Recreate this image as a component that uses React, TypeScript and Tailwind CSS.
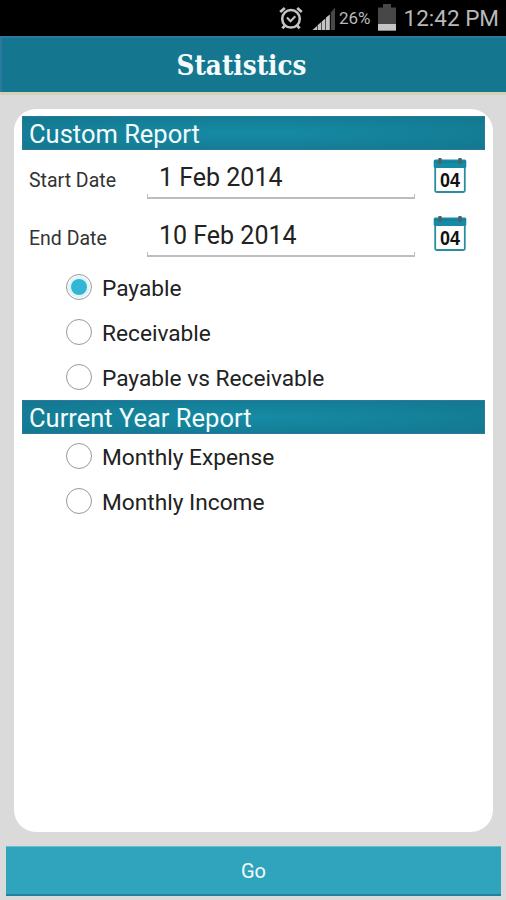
import React, { useState } from 'react';

interface RadioRowProps {
  label: string;
  checked: boolean;
  onSelect: () => void;
}

interface DateRowProps {
  label: string;
  value: string;
}

const CUSTOM_REPORTS = ['Payable', 'Receivable', 'Payable vs Receivable'];
const YEAR_REPORTS = ['Monthly Expense', 'Monthly Income'];

// --- Icons ---

const AlarmIcon: React.FC = () => (
  <svg width="24" height="24" viewBox="0 0 24 24" fill="none" stroke="#c4c4c4" strokeWidth="2.5">
    <circle cx="12" cy="12.8" r="8.8" />
    <path d="M8 11.6l3.5 3.6 4.8-4.9" strokeWidth="2.1" />
    <path d="M1.2 6l4.6-4M22.8 6l-4.6-4" strokeWidth="2.8" />
    <path d="M6 19.3l-2.6 3M18 19.3l2.6 3" strokeWidth="2.8" />
  </svg>
);

const SignalIcon: React.FC = () => (
  <svg width="24" height="24" viewBox="0 0 24 24">
    <path d="M.5 23L5 19v4z" fill="#c4c4c4" />
    <path d="M5.6 18.2L9.200 15v8H5.600zM9.800 14.400l3.600-2.800V23H9.800zM14 10.600l3.800-3V23H14z" fill="#c4c4c4" />
    <path d="M18.800 5.500L23 .8V23h-4.200z" fill="#474747" />
  </svg>
);

const BatteryIcon: React.FC = () => (
  <svg width="18" height="27" viewBox="0 0 18 27">
    <path d="M5 0h8v3.500h5V27H0V3.500h5z" fill="#474747" />
    <path d="M0 20h18v6.500H0z" fill="#c4c4c4" />
  </svg>
);

const CalendarIcon: React.FC = () => (
  <svg width="34" height="37" viewBox="0 0 34 37">
    <rect x="2.2" y="4" width="29.6" height="30" rx="1.5" fill="#fff" stroke="#2b8da3" strokeWidth="1.8" />
    <path d="M.7 3q0-1.500 1.500-1.500h29.600q1.500 0 1.500 1.500V8.500q0 1.500-1.500 1.500H2.200Q.7 10 .7 8.500z" fill="#168ba5" />
    <path d="M1 4h32" stroke="#14778f" />
    <path d="M7 1.500v3M27 1.500v3" stroke="#4c626b" strokeWidth="3.600" strokeLinecap="round" />
    <text
      x="17"
      y="28.5"
      textAnchor="middle"
      textLength="20"
      lengthAdjust="spacingAndGlyphs"
      fontFamily="Liberation Sans, sans-serif"
      fontWeight="700"
      fontSize="20"
      fill="#111"
    >
      04
    </text>
  </svg>
);

// --- Rows ---

const SectionTitle: React.FC<{ children: React.ReactNode }> = ({ children }) => (
  <h2 className="h-[34px] border border-[#2c79a0] bg-radial from-[#168ba5] to-[#13778f] pl-1.5 text-[25.5px] leading-[34px] text-[#f4fbfc]">
    {children}
  </h2>
);

const DateRow: React.FC<DateRowProps> = ({ label, value }) => (
  <div className="flex h-[57.5px] pl-[7px]">
    <span className="w-[118px] pt-[17px] text-[19.5px] leading-7 text-[#333]">{label}</span>
    <div className="w-[268px]">
      <div className="h-11 pl-3 pt-3 text-[25px] leading-8 text-[#222]">{value}</div>
      <div className="h-[5px] border-x border-b-2 border-[#bdbdbd]" />
    </div>
    <button className="ml-[18px] h-[37px] pt-2">
      <CalendarIcon />
    </button>
  </div>
);

const RadioRow: React.FC<RadioRowProps> = ({ label, checked, onSelect }) => (
  <button
    role="radio"
    aria-checked={checked}
    onClick={onSelect}
    className="flex h-[45px] w-full items-center gap-2.5 pl-[44px] text-left text-[22.7px] text-[#222]"
  >
    <span className="mb-px flex size-[26px] items-center justify-center rounded-full border-[1.5px] border-[#999]">
      {checked && <span className="size-4 rounded-full bg-[#33b5d5] ring-3 ring-[#e0f5fa]" />}
    </span>
    <span className="pt-0.5 leading-8">{label}</span>
  </button>
);

const App: React.FC = () => {
  const [selected, setSelected] = useState('Payable');

  return (
    <div className="flex h-[900px] w-[506px] flex-col overflow-hidden bg-[#dadada] font-[Roboto,sans-serif]">
      {/* Status bar */}
      <div className="flex h-9 shrink-0 items-center justify-end bg-black pr-[7px] text-[#b9b9b9]">
        <AlarmIcon />
        <span className="ml-[9px] pt-px">
          <SignalIcon />
        </span>
        <span className="ml-[3px] pt-0.5 text-[17px]">26%</span>
        <span className="ml-[7px] pb-0.5">
          <BatteryIcon />
        </span>
        <span className="ml-2 pt-0.5 text-[22.5px]">12:42 PM</span>
      </div>

      <header className="flex h-14 shrink-0 items-center justify-center border-l-2 border-t-2 border-[#2b78a0] bg-[#14778f] pr-[25px]">
        <h1 className="pt-0.5 font-['DejaVu_Serif_Condensed','DejaVu_Serif',serif] text-[27.5px] font-bold text-[#f4fbfc]">
          Statistics
        </h1>
      </header>
      <div className="h-[3px] shrink-0 bg-[#d4cfb7]" />

      <main className="mx-3.5 mt-3.5 h-[723px] w-[479px] shrink-0 rounded-[22px] bg-white px-2 pt-[7px]">
        <SectionTitle>Custom Report</SectionTitle>
        <DateRow label="Start Date" value="1 Feb 2014" />
        <DateRow label="End Date" value="10 Feb 2014" />
        <div role="radiogroup" className="h-[135px]">
          {CUSTOM_REPORTS.map((report) => (
            <RadioRow
              key={report}
              label={report}
              checked={selected === report}
              onSelect={() => setSelected(report)}
            />
          ))}
        </div>
        <SectionTitle>Current Year Report</SectionTitle>
        <div role="radiogroup">
          {YEAR_REPORTS.map((report) => (
            <RadioRow
              key={report}
              label={report}
              checked={selected === report}
              onSelect={() => setSelected(report)}
            />
          ))}
        </div>
      </main>

      <button className="ml-1.5 mt-3.5 h-[50px] w-[495px] shrink-0 border-b-2 border-t border-b-[#22819a] border-t-[#68bccb] bg-[#30a4bd] text-[20px] text-[#f4fbfc]">
        Go
      </button>
    </div>
  );
};

export default App;
